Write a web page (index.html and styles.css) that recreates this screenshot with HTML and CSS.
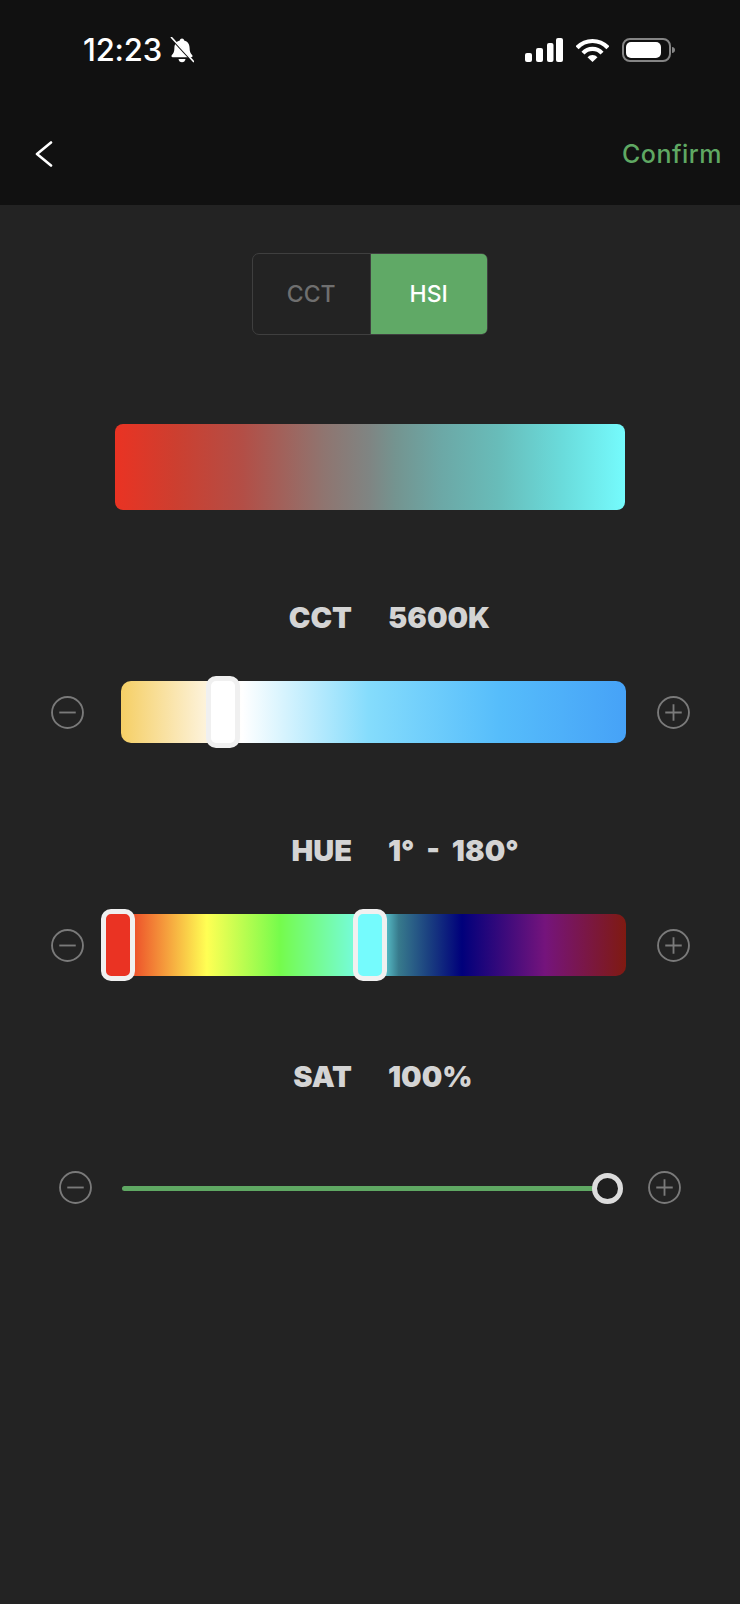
FILE: index.html
```html
<!DOCTYPE html>
<html>

<head>
  <title>Light Color</title>
  <link rel="stylesheet" href="styles.css">
</head>

<body>
  <div class="header">
    <div class="status-bar">
      <div class="status-left">
        <span class="time">12:23</span>
        <svg class="bell" viewBox="0 0 24 26">
          <path d="M12 1.500c1.200 0 2 .8 2.200 1.900 3.600.9 5.400 3.900 5.400 7.600 0 3.400.9 5.400 2.500 7 .9.9.4 2.200-.9 2.200H2.800c-1.300 0-1.800-1.300-.9-2.200 1.600-1.600 2.500-3.600 2.500-7 0-3.700 1.800-6.700 5.400-7.600.2-1.100 1-1.900 2.200-1.900z" />
          <path d="M8.500 22h7c-.2 2-1.700 3.300-3.500 3.300s-3.300-1.300-3.500-3.300z" />
          <path class="bell-gap" d="M-1 -1L24 26" />
          <path class="bell-slash" d="M1 0L24 25" />
        </svg>
      </div>
      <div class="status-right">
        <svg class="signal" viewBox="0 0 38 24">
          <rect x="0" y="15" width="7" height="9" rx="2" />
          <rect x="11" y="10" width="7" height="14" rx="2" />
          <rect x="22" y="5" width="6.500" height="19" rx="2" />
          <rect x="31" y="0" width="7" height="24" rx="2" />
        </svg>
        <svg class="wifi" viewBox="0 0 33 24">
          <path class="wifi-arc" d="M1.100 9.700A21 21 0 0 1 31.900 9.700" />
          <path class="wifi-arc" d="M7 15.100A13 13 0 0 1 26 15.100" />
          <path d="M16.500 24L11.500 19.300A6.800 6.800 0 0 1 21.500 19.300z" />
        </svg>
        <svg class="battery" viewBox="0 0 53 24">
          <rect class="battery-case" x="1" y="1" width="47" height="22" rx="7" />
          <rect x="4" y="4" width="35" height="16" rx="5" />
          <path class="battery-nub" d="M50 9c2 .3 3 1.300 3 3s-1 2.700-3 3z" />
        </svg>
      </div>
    </div>
    <div class="nav-bar">
      <svg class="back" viewBox="0 0 18 26">
        <path d="M16 1.500L2 13l14 11.500" />
      </svg>
      <span class="confirm">Confirm</span>
    </div>
  </div>

  <div class="content">
    <div class="mode-toggle">
      <div class="mode-btn">CCT</div>
      <div class="mode-btn active">HSI</div>
    </div>

    <div class="preview-bar"></div>

    <div class="value-label cct-label"><span class="key">CCT</span><span>5600K</span></div>
    <div class="slider-row">
      <svg class="step" viewBox="0 0 32 32"><circle cx="16" cy="16" r="15" /><path d="M8 16h16" /></svg>
      <div class="bar cct-bar">
        <div class="thumb cct-thumb"></div>
      </div>
      <svg class="step" viewBox="0 0 32 32"><circle cx="16" cy="16" r="15" /><path d="M8 16h16M16 8v16" /></svg>
    </div>

    <div class="value-label hue-label"><span class="key">HUE</span><span>1° - 180°</span></div>
    <div class="slider-row">
      <svg class="step" viewBox="0 0 32 32"><circle cx="16" cy="16" r="15" /><path d="M8 16h16" /></svg>
      <div class="bar hue-bar">
        <div class="thumb hue-start"></div>
        <div class="thumb hue-end"></div>
      </div>
      <svg class="step" viewBox="0 0 32 32"><circle cx="16" cy="16" r="15" /><path d="M8 16h16M16 8v16" /></svg>
    </div>

    <div class="value-label sat-label"><span class="key">SAT</span><span>100%</span></div>
    <div class="sat-row">
      <svg class="step" viewBox="0 0 32 32"><circle cx="16" cy="16" r="15" /><path d="M8 16h16" /></svg>
      <div class="sat-track">
        <div class="sat-knob"></div>
      </div>
      <svg class="step" viewBox="0 0 32 32"><circle cx="16" cy="16" r="15" /><path d="M8 16h16M16 8v16" /></svg>
    </div>
  </div>
</body>

</html>
```

FILE: styles.css
```css
body {
  margin: 0;
  width: 740px;
  height: 1604px;
  overflow: hidden;
  background-color: #232323;
  font-family: "Inter", "Liberation Sans", sans-serif;
  color: #d4d4d4;
}

/* Top area */
.header {
  height: 205px;
  background-color: #111;
}

.status-bar {
  display: flex;
  justify-content: space-between;
  align-items: center;
  height: 50px;
  padding: 25px 65px 0 83px;
}

.status-left,
.status-right {
  display: flex;
  align-items: center;
}

.time {
  font-size: 31px;
  font-weight: 500;
  line-height: 50px;
  letter-spacing: -0.2px;
  color: #fff;
}

.bell {
  width: 24px;
  height: 26px;
  margin-left: 8px;
  fill: #fff;
}

.bell-gap {
  stroke: #111;
  stroke-width: 2px;
}

.bell-slash {
  stroke: #fff;
  stroke-width: 1.6px;
}

.signal {
  width: 38px;
  height: 24px;
  fill: #fff;
}

.wifi {
  width: 33px;
  height: 24px;
  margin-left: 13px;
  fill: #fff;
}

.wifi-arc {
  fill: none;
  stroke: #fff;
  stroke-width: 4.2px;
}

.battery {
  width: 53px;
  height: 24px;
  margin-left: 13px;
  fill: #fff;
}

.battery-case {
  fill: none;
  stroke: #858585;
  stroke-width: 2px;
}

.battery-nub {
  fill: #858585;
}

.nav-bar {
  display: flex;
  justify-content: space-between;
  align-items: center;
  height: 60px;
  margin-top: 49px;
  padding: 0 18px 0 35px;
}

.back {
  width: 18px;
  height: 26px;
  fill: none;
  stroke: #fff;
  stroke-width: 2.600px;
  stroke-linecap: round;
  stroke-linejoin: round;
}

.confirm {
  font-size: 25px;
  font-weight: 500;
  letter-spacing: 0.5px;
  color: #5fa863;
}

/* Main content */
.mode-toggle {
  display: flex;
  width: 236px;
  height: 82px;
  margin: 48px auto 0;
  box-sizing: border-box;
  border: 1.5px solid #3f3f3f;
  border-radius: 7px;
}

.mode-btn {
  flex: 1;
  display: flex;
  align-items: center;
  justify-content: center;
  font-size: 23px;
  font-weight: 500;
  color: #6f6f6f;
}

.mode-btn.active {
  border-radius: 0 5px 5px 0;
  border-left: 1.5px solid #3f3f3f;
  background-color: #60a966;
  color: #fff;
}

.preview-bar {
  height: 86px;
  margin: 89px 115px 0;
  border-radius: 8px;
  background: linear-gradient(90deg, #ea3323, #cc3f30 12%, #b34e46 25%, #8f7570 41%, #7f8583 50%, #749490 55%, #6ca8a6 64%, #68bcb9 75%, #6adcdc 88%, #75fbfd);
}

.value-label {
  display: grid;
  grid-template-columns: 1fr 1fr;
  gap: 36px;
  font-size: 29px;
  font-weight: 900;
  line-height: 36px;
  word-spacing: 6px;
}

.key {
  text-align: right;
}

.cct-label {
  margin-top: 90px;
}

.hue-label {
  margin-top: 90px;
}

.sat-label {
  margin-top: 83px;
}

.slider-row {
  display: flex;
  align-items: center;
  height: 62px;
  margin-top: 45px;
  padding-left: 51px;
}

.step {
  flex: none;
  width: 33px;
  height: 33px;
  fill: none;
  stroke: #7a7a7a;
  stroke-width: 1.800px;
}

.bar {
  position: relative;
  width: 505px;
  height: 62px;
  margin: 0 31px 0 37px;
  border-radius: 10px;
}

.cct-bar {
  background: linear-gradient(90deg, #f5cf65, #fdf3dc 17%, #fff 24%, #85dcfc 49%, #56bdfb 75%, #46a2f7);
}

.hue-bar {
  background: linear-gradient(90deg, #ea3323, #ffff54 17%, #75fb4c 31.500%, #75fbfd 50%, #377a8c 55%, #1a3f80 61%, #00007b 67.500%, #75147c 84%, #7f1a11);
}

.thumb {
  position: absolute;
  top: -5px;
  width: 34px;
  height: 72px;
  box-sizing: border-box;
  border: 5px solid #f0f0f0;
  border-radius: 10px;
}

.cct-thumb {
  left: 85px;
  background-color: #fff;
}

.hue-start {
  left: -20px;
  background-color: #ea3323;
}

.hue-end {
  left: 232px;
  background-color: #75fbfd;
}

.sat-row {
  display: flex;
  align-items: center;
  height: 33px;
  margin-top: 76px;
  padding-left: 59px;
}

.sat-track {
  position: relative;
  width: 486px;
  height: 5px;
  margin: 2px 40px 0 30px;
  border-radius: 3px;
  background-color: #5fa863;
}

.sat-knob {
  position: absolute;
  top: -13px;
  right: -15px;
  width: 31px;
  height: 31px;
  box-sizing: border-box;
  border: 5px solid #dcdcdc;
  border-radius: 50%;
  background-color: #1e1e1e;
}
```
